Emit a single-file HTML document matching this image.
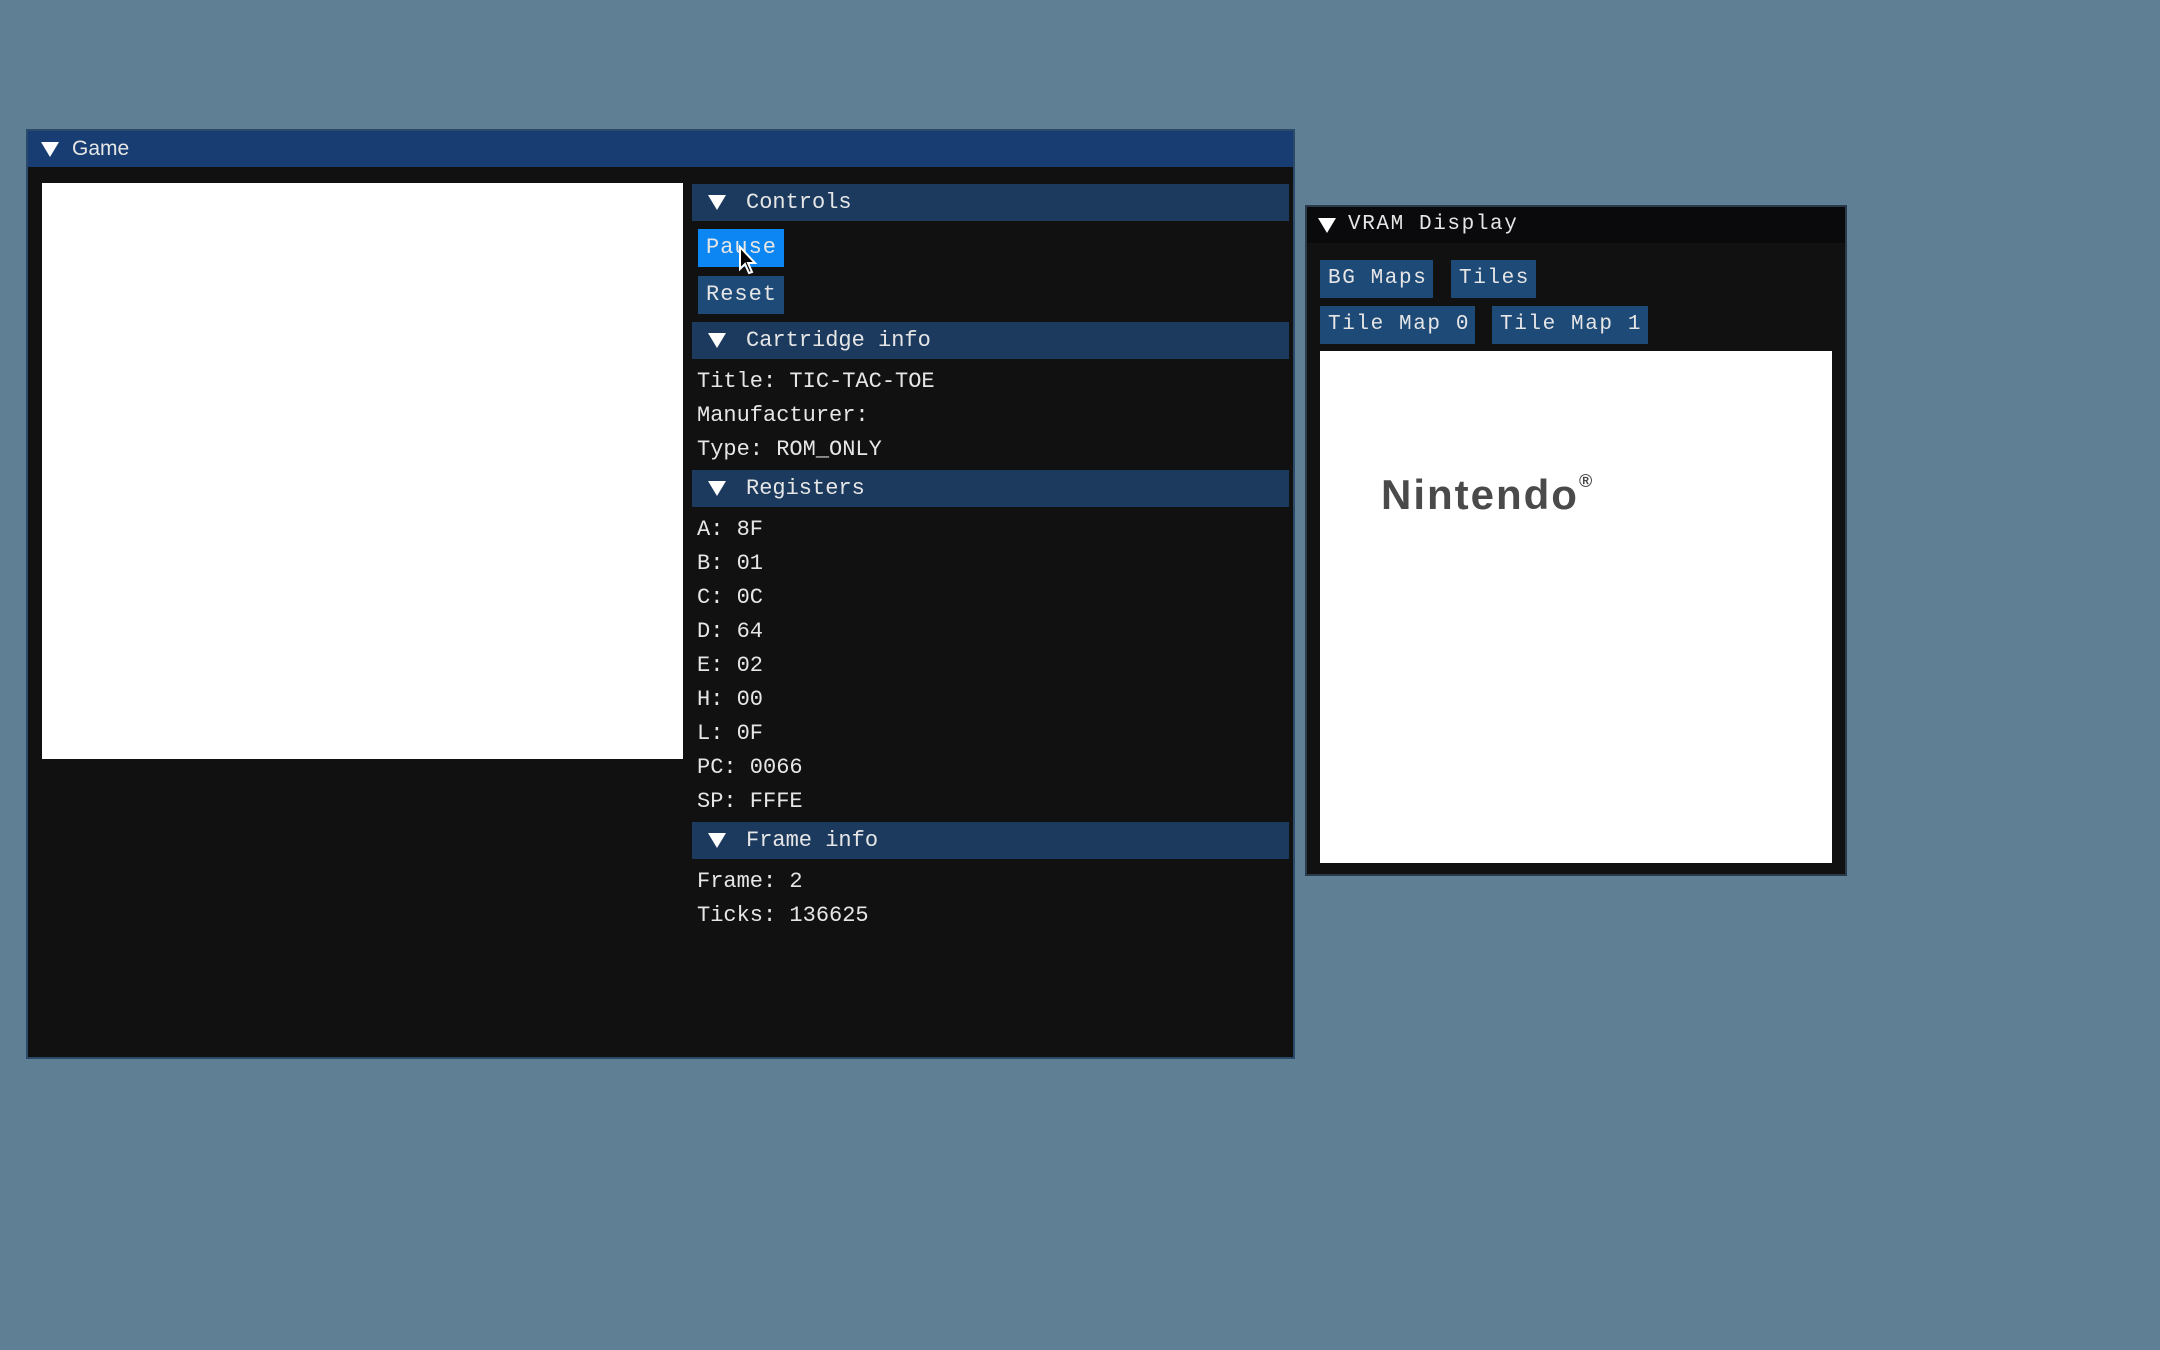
<!DOCTYPE html>
<html><head><style>
body{margin:0;width:2160px;height:1350px;background:#5f8094;position:relative;overflow:hidden;font-family:"Liberation Mono",monospace;color:#e6e6e6}
div{position:absolute;box-sizing:border-box}
.win{background:#111112;border:2px solid #2b4a6a}
.hdr{background:#1b3a5e;height:37px;left:664px;width:597px}
.tri{width:0;height:0;border-left:9px solid transparent;border-right:9px solid transparent;border-top:15px solid #fff}
.t{font-size:22px;line-height:34px;white-space:pre}
.btn{background:#1e4a78;font-size:22px;line-height:38px;padding-left:8px;white-space:pre;letter-spacing:1px}
</style></head><body>
<div class="win" style="left:26px;top:129px;width:1269px;height:930px">
 <div style="left:0;top:0;width:1265px;height:36px;background:#173d72"></div>
 <div class="tri" style="left:13px;top:11px"></div>
 <div style="left:44px;top:3px;font-family:'Liberation Sans',sans-serif;font-size:21px;line-height:30px">Game</div>
 <div style="left:14px;top:52px;width:641px;height:576px;background:#fff"></div>
 <div class="hdr" style="top:53px"></div><div class="tri" style="left:680px;top:64px"></div><div class="t" style="left:718px;top:55px">Controls</div>
 <div class="btn" style="left:670px;top:98px;width:86px;background:#0c86f2">Pause</div>
 <div class="btn" style="left:670px;top:145px;width:86px">Reset</div>
 <div class="hdr" style="top:191px"></div><div class="tri" style="left:680px;top:202px"></div><div class="t" style="left:718px;top:193px">Cartridge info</div>
 <div class="t" style="left:669px;top:234px">Title: TIC-TAC-TOE
Manufacturer:
Type: ROM_ONLY</div>
 <div class="hdr" style="top:339px"></div><div class="tri" style="left:680px;top:350px"></div><div class="t" style="left:718px;top:341px">Registers</div>
 <div class="t" style="left:669px;top:382px">A: 8F
B: 01
C: 0C
D: 64
E: 02
H: 00
L: 0F
PC: 0066
SP: FFFE</div>
 <div class="hdr" style="top:691px"></div><div class="tri" style="left:680px;top:702px"></div><div class="t" style="left:718px;top:693px">Frame info</div>
 <div class="t" style="left:669px;top:734px">Frame: 2
Ticks: 136625</div>
</div>
<svg style="position:absolute;left:738px;top:245px" width="22" height="32"><path d="M2 2 L2 24 L7 19 L11 28 L14 27 L10 18 L17 18 Z" fill="#000" stroke="#fff" stroke-width="2"/></svg>
<div class="win" style="left:1305px;top:205px;width:542px;height:671px;border-color:#2a3a4a">
 <div style="left:0;top:0;width:538px;height:36px;background:#0a0a0c"></div>
 <div class="tri" style="left:11px;top:11px"></div>
 <div class="t" style="left:41px;top:1px;font-size:21px;letter-spacing:1.6px">VRAM Display</div>
 <div class="btn" style="left:13px;top:53px;width:113px;font-size:21px;letter-spacing:1.6px">BG Maps</div>
 <div class="btn" style="left:144px;top:53px;width:85px;font-size:21px;letter-spacing:1.6px">Tiles</div>
 <div class="btn" style="left:13px;top:99px;width:155px;font-size:21px;letter-spacing:1.6px">Tile Map 0</div>
 <div class="btn" style="left:185px;top:99px;width:156px;font-size:21px;letter-spacing:1.6px">Tile Map 1</div>
 <div style="left:13px;top:144px;width:512px;height:512px;background:#fff"></div>
 <div style="left:74px;top:264px;font-family:'Liberation Sans',sans-serif;font-weight:bold;font-size:42px;color:#4a4a4a;letter-spacing:2px">Nintendo<span style="font-size:18px;vertical-align:top">®</span></div>
</div>
</body></html>
